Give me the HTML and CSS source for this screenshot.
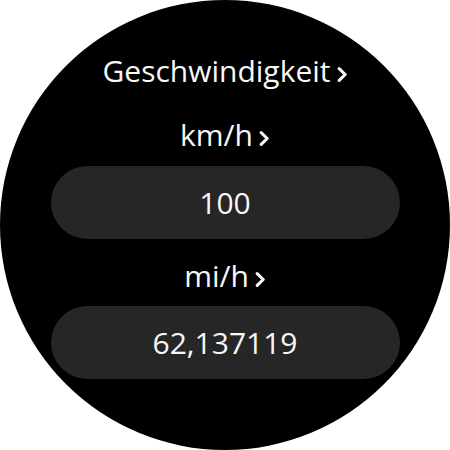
FILE: index.html
```html
<!DOCTYPE html>
<html lang="de">
<head>
<meta charset="utf-8">
<title>Geschwindigkeit</title>
<link rel="stylesheet" href="styles.css">
</head>
<body>
<div class="watch">
  <div class="label title">Geschwindigkeit<svg class="chev" viewBox="0 0 11 15" width="11" height="15"><path d="M2.2 1.7 L8.2 7.5 L2.2 13.3" /></svg></div>
  <div class="label unit1">km/h<svg class="chev" viewBox="0 0 11 15" width="11" height="15"><path d="M2.2 1.7 L8.2 7.5 L2.2 13.3" /></svg></div>
  <div class="pill">100</div>
  <div class="label unit2">mi/h<svg class="chev" viewBox="0 0 11 15" width="11" height="15"><path d="M2.2 1.7 L8.2 7.5 L2.2 13.3" /></svg></div>
  <div class="pill">62,137119</div>
</div>
</body>
</html>
```
FILE: styles.css
```css
html, body {
  margin: 0;
  padding: 0;
  background: #ffffff;
}
.watch {
  width: 450px;
  height: 450px;
  border-radius: 50%;
  background: #000000;
  display: flex;
  flex-direction: column;
  align-items: center;
  box-sizing: border-box;
  padding-top: 51px;
  font-family: "Open Sans", "Noto Sans", sans-serif;
  color: #f8f8f8;
  font-size: 30px;
}
.label {
  height: 40px;
  line-height: 40px;
  display: flex;
  align-items: baseline;
  gap: 6px;
}
.chev {
  fill: none;
  stroke: #f8f8f8;
  stroke-width: 3.1;
  stroke-linecap: round;
  stroke-linejoin: round;
  margin-bottom: -1px;
}
.title {
  margin-bottom: 24px;
}
.unit1 {
  margin-bottom: 11px;
}
.unit2 {
  margin-top: 17px;
  margin-bottom: 10px;
}
.pill {
  width: 349px;
  height: 73px;
  line-height: 73px;
  border-radius: 37px;
  background: #262626;
  text-align: center;
}
```
